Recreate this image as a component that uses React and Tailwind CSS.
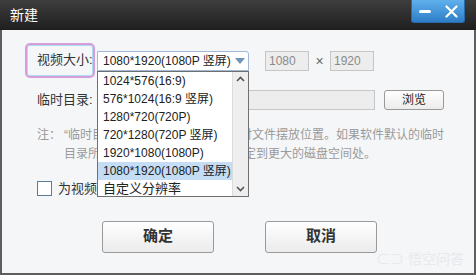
import React from "react";

const F = { fontFamily: '"Liberation Sans", "Noto Sans CJK SC", sans-serif' };

const options = [
  "1024*576(16:9)",
  "576*1024(16:9 竖屏)",
  "1280*720(720P)",
  "720*1280(720P 竖屏)",
  "1920*1080(1080P)",
  "1080*1920(1080P 竖屏)",
  "自定义分辨率",
];

export default function App() {
  return (
    <div
      className="relative w-[476px] h-[275px] overflow-hidden bg-[#2a2a2a] flex flex-col"
      style={F}
    >
      {/* title bar */}
      <div className="h-[30px] shrink-0 bg-gradient-to-b from-[#3e3e3e] to-[#1f1f1f] flex items-start justify-between">
        <div className="pl-[10px] pt-[5px] text-[14px] leading-[20px] text-white">新建</div>
        <div className="mr-[11px] w-[54px] h-[23px] rounded-b-[3px] bg-gradient-to-b from-[#5fb0ec] to-[#2e7ec8] flex items-center border border-t-0 border-[#2a6aa8]">
          <div className="w-[27px] flex justify-center">
            <div className="w-[12px] h-[3px] rounded-full bg-white" />
          </div>
          <div className="w-[27px] flex justify-center">
            <svg width="13" height="13" viewBox="0 0 13 13">
              <path d="M1.5 1.5 L11.5 11.5 M11.5 1.5 L1.5 11.5" stroke="white" strokeWidth="2.2" strokeLinecap="round" />
            </svg>
          </div>
        </div>
      </div>

      {/* body */}
      <div className="flex-1 bg-[#f5f6f8] border-l-2 border-r-2 border-b-2 border-[#5e5e5e] flex flex-col pl-[23px]">
        {/* row 1 */}
        <div className="mt-[12px] flex items-center h-[36px]">
          <div className="w-[70px] h-[35px] rounded-[5px] border-2 border-[#d79ddb] shadow-[inset_0_0_0_1px_#a9dcee] flex items-center pl-[10px] text-[13px] text-[#333]">
            视频大小:
          </div>
          <div className="ml-[2px] w-[152px] h-[20px] mt-[2px] bg-white border border-[#9fb9d6] rounded-tr-[3px] flex items-center pl-[5px] text-[12px] text-[#222]">
            <span className="flex-1">1080*1920(1080P 竖屏)</span>
            <svg width="10" height="6" viewBox="0 0 10 6" className="mr-[3px]">
              <path d="M0 0 L10 0 L5 6 Z" fill="#6f93b8" />
            </svg>
          </div>
          <div className="ml-[16px] mt-[2px] w-[44px] h-[20px] bg-[#ededed] border border-[#c6c6c6] text-[12px] text-[#8a8a8a] pl-[3px] leading-[18px]">1080</div>
          <div className="w-[21px] mt-[2px] text-center text-[14px] text-[#666]">×</div>
          <div className="mt-[2px] w-[44px] h-[20px] bg-[#ededed] border border-[#c6c6c6] text-[12px] text-[#8a8a8a] pl-[3px] leading-[18px]">1920</div>
        </div>

        {/* row 2 */}
        <div className="mt-[12px] flex items-center h-[20px]">
          <div className="w-[74px] pl-[12px] text-[13px] text-[#333]">临时目录:</div>
          <div className="w-[276px] h-[20px] bg-[#ededed] border border-[#c6c6c6]" />
          <div className="ml-[9px] w-[60px] h-[20px] rounded-[3px] border border-[#9a9a9a] bg-gradient-to-b from-white to-[#ececec] text-[12px] text-[#222] flex items-center justify-center">
            浏览
          </div>
        </div>

        {/* note */}
        <div className="mt-[16px] pl-[12px] flex text-[12px] leading-[19px] text-[#9a9a9a]">
          <span className="w-[27px] shrink-0">注：</span>
          <span className="w-[380px]">
            “临时目录”是软件生成视频时的临时文件摆放位置。如果软件默认的临时目录所在的磁盘空间不够用，请指定到更大的磁盘空间处。
          </span>
        </div>

        {/* checkbox */}
        <div className="mt-[15px] flex items-center pl-[12px]">
          <div className="w-[15px] h-[15px] bg-white border border-[#5a7b94]" />
          <span className="ml-[6px] text-[13px] text-[#333]">为视频自动添加片头片尾</span>
        </div>

        {/* buttons */}
        <div className="mt-[22px] flex pl-[77px] gap-[51px]">
          <div className="w-[112px] h-[32px] rounded-[3px] border border-[#9a9a9a] bg-gradient-to-b from-white to-[#ebebeb] flex items-center justify-center text-[15px] font-bold text-[#333]">
            确定
          </div>
          <div className="w-[112px] h-[32px] rounded-[3px] border border-[#9a9a9a] bg-gradient-to-b from-white to-[#ebebeb] flex items-center justify-center text-[15px] font-bold text-[#333]">
            取消
          </div>
        </div>
        <div className="self-end mr-[10px] -mt-[4px] text-[14px] text-[#e8e9ec]">⊂⊃ 悟空问答</div>
      </div>

      {/* dropdown list overlay */}
      <div className="absolute left-[97px] top-[71px] w-[152px] h-[126px] bg-white border border-[#6f6f6f] flex">
        <div className="flex-1 flex flex-col">
          {options.map((o, i) => (
            <div
              key={o}
              className={
                "h-[18px] leading-[18px] pl-[5px] text-[#222] " +
                (i === 5 ? "bg-[#c4dcf4] " : "") +
                (i === 6 ? "text-[13px]" : "text-[12px]")
              }
            >
              {o}
            </div>
          ))}
        </div>
        <div className="w-[16px] bg-[#eeeeee] border-l border-[#dcdcdc] flex flex-col justify-between items-center py-[4px]">
          <svg width="9" height="6" viewBox="0 0 9 6">
            <path d="M1 5 L4.5 1.5 L8 5" stroke="#555" strokeWidth="1.6" fill="none" />
          </svg>
          <svg width="9" height="6" viewBox="0 0 9 6">
            <path d="M1 1 L4.5 4.5 L8 1" stroke="#555" strokeWidth="1.6" fill="none" />
          </svg>
        </div>
      </div>
    </div>
  );
}
